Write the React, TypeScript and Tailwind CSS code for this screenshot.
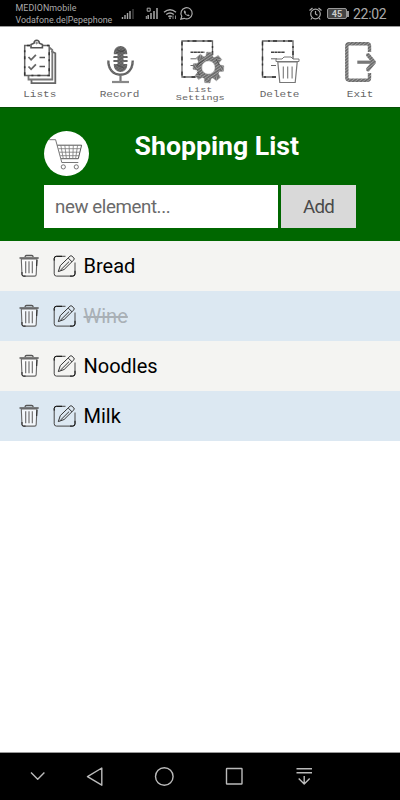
import type { ReactNode } from "react";

const shade = "#666";

function Hatch({ id }: { id: string }) {
  return (
    <pattern id={id} width="2.4" height="2.4" patternUnits="userSpaceOnUse" patternTransform="rotate(-38)">
      <rect width="2.4" height="2.4" fill="#a0a0a0" />
      <path d="M0 .8H2.4" stroke="#555" strokeWidth="1.1" />
    </pattern>
  );
}

function DocumentLines({ x }: { x: number }) {
  return (
    <g transform={`translate(${x} 0)`} fill="none" stroke="#666">
      <path d="M15 77H1.5V41H32V61" strokeWidth="1.3" />
      <path d="M15 77H1.5V41H32V61" strokeWidth="1.4" stroke="#333" strokeDasharray="4 6 2 3" />
      <path d="M10 52.2H24" strokeWidth="1.4" stroke="#444" strokeDasharray="3 .4" />
      <path d="M10 58.8H16M10 65.5H15" strokeWidth="1" />
    </g>
  );
}

function ListsIcon() {
  return (
    <svg className="h-[52px] w-20" viewBox="0 36 80 52" fill="none" stroke={shade}>
      <path d="M31.5 80v3.2h23.8V53.3l-4-2" strokeWidth="1.8" />
      <path d="M28.5 76v3.5h23.8V50l-3-2.5" strokeWidth="1.8" stroke="#777" />
      <path d="M30 45.5h-5.3v30h24.5v-30H43" strokeWidth="1.5" fill="#fff" />
      <path d="M30 45.5h-5.3v30h24.5v-30H43" strokeWidth="1.5" stroke="#333" strokeDasharray="3 7 2 4" />
      <path d="M31 47.8v-3.2l3-1.3c.4-4 5-4 5.4 0l3 1.3v3.2z" strokeWidth="1.6" fill="#fff" stroke="#555" />
      <circle cx="36.6" cy="43" r=".8" />
      <path d="m28.5 57 2.6 2.8 4.8-5M28.5 66.5l2.6 2.8 4.8-5" strokeWidth="1.8" />
      <path d="M39.5 57.5H45M39.5 66.5H45" strokeWidth="1.6" stroke="#555" />
    </svg>
  );
}

function RecordIcon() {
  return (
    <svg className="h-[52px] w-20" viewBox="80 36 80 52" fill="none" stroke={shade}>
      <defs><Hatch id="mic" /></defs>
      <rect x="113.8" y="46" width="13.4" height="26" rx="6.7" fill="url(#mic)" stroke="none" />
      <path d="M113 55.2h4.5M123.5 55.2h4.5M113 59h4.5M123.5 59h4.5M113 63h4.5M123.5 63h4.5" stroke="#fff" strokeWidth="1.8" />
      <path d="M113 57.1h4M124 57.1h4M113 61h4M124 61h4" strokeWidth="1" />
      <path d="M117 50l7 2M116 53l9-3M117 65l7 3" stroke="#444" strokeWidth=".7" />
      <path d="M108.3 60.5c0 8.5 4.5 14.3 12.2 14.3s12.2-5.8 12.2-14.3" strokeWidth="2.4" stroke="url(#mic)" />
      <path d="M120.5 75v6" strokeWidth="2.2" stroke="#777" />
      <path d="M112 82h17" strokeWidth="2.2" stroke="#888" />
    </svg>
  );
}

const teeth = [0, 45, 90, 135, 180, 225, 270, 315];

function SettingsIcon() {
  return (
    <svg className="h-[52px] w-20" viewBox="160 36 80 52">
      <defs><Hatch id="gear" /></defs>
      <DocumentLines x={180.5} />
      <g transform="translate(208.4 67.5) rotate(4)">
        <circle r="13" fill="#fff" />
        {teeth.map((a) => (
          <path key={a} d="M-3.6-10-2.7-15.3H2.7L3.6-10Z" transform={`rotate(${a})`} fill="url(#gear)" stroke="#888" strokeWidth=".4" />
        ))}
        <circle r="9.2" fill="none" stroke="url(#gear)" strokeWidth="5" />
        <circle r="6.6" fill="#fff" stroke="#777" strokeWidth=".4" />
        <path d="M-11-2-5-7M7-9l4 6M-8 8l-3-3M-12 0l4-5" stroke="#444" strokeWidth=".7" />
      </g>
    </svg>
  );
}

function DeleteIcon() {
  return (
    <svg className="h-[52px] w-20" viewBox="240 36 80 52" fill="none" stroke="#777">
      <DocumentLines x={261} />
      <path d="m277.8 62 2 20.5h15.4l2-20.5z" fill="#fff" strokeWidth="1.2" />
      <path d="M276 59h6l2-2h7l2 2h6v2.5h-23z" fill="#fff" strokeWidth="1" />
      <path d="M283.3 66.5v12M287.7 66.5v12M292.1 66.5v12" strokeWidth="1.1" />
    </svg>
  );
}

function ExitIcon() {
  return (
    <svg className="h-[52px] w-20" viewBox="320 36 80 52" fill="none">
      <defs><Hatch id="exit" /></defs>
      <path d="M369.5 52v-6q0-2.2-2.3-2.2h-18q-2.4 0-2.4 2.4v31.6q0 2.4 2.4 2.4h18q2.3 0 2.3-2.2v-5" stroke="url(#exit)" strokeWidth="3.4" />
      <path d="M357.3 62.2H373" stroke="#777" strokeWidth="3.2" />
      <path d="m368 55 6 7.2-6 7.2" stroke="url(#exit)" strokeWidth="4" strokeLinecap="round" strokeLinejoin="round" />
    </svg>
  );
}

function ToolButton({ label, second, children }: { label: string; second?: string; children: ReactNode }) {
  return (
    <button className="flex w-20 flex-col items-center pt-[9px] text-[#666]">
      {children}
      {second ? (
        <span className="-mt-[2px] flex origin-center scale-x-[1.42] flex-col gap-[1px] text-center text-[7.2px] leading-[8px]">
          <span>{label}</span><span className="-mt-[1px]">{second}</span>
        </span>
      ) : (
        <span className="mt-[2px] origin-center scale-x-[1.2] text-[9.2px] leading-[10px]">{label}</span>
      )}
    </button>
  );
}

function CartIcon() {
  return (
    <svg className="h-[45px] w-[45px]" viewBox="44.2 130.8 45 45" fill="none" stroke="#555" strokeWidth=".8">
      <circle cx="66.7" cy="153.3" r="22.5" fill="#fff" stroke="none" />
      <path d="M49.5 139.5h6.3L62 162.3h16.5" />
      <path d="M57.5 145h24.3l-3.3 13.5H61.3" strokeWidth="1" />
      <path d="M58.5 148.5h22.4M59.5 152h20.6M60.5 155.5h18.7M61 145l2.5 13.5M65 145l1.6 13.5M69.3 145l.5 13.5M73.5 145l-.5 13.5M77.8 145l-2 13.5" strokeWidth=".8" stroke="#777" />
      <circle cx="63.5" cy="166.7" r="2.1" />
      <circle cx="76.5" cy="166.7" r="2.1" />
    </svg>
  );
}

function TrashIcon() {
  return (
    <svg className="h-[25px] w-[21px]" viewBox="19 254 21 25" fill="none" stroke="#666">
      <path d="m21.3 259 .7 15.6q.1 1.5 1.6 1.5h11q1.5 0 1.6-1.5l.7-15.6z" fill="#fff" fillOpacity=".65" strokeWidth="1.1" />
      <path d="M22 272v2.6q.1 1.5 1.6 1.5h2M37 260l-.3 6" stroke="#222" />
      <path d="M19.5 258h19.2M25 257q.2-1.5 1.6-1.5h5q1.4 0 1.6 1.5" strokeWidth="1.3" stroke="#555" />
      <path d="M25.7 261.3v12M29 261.3v12M32.3 261.3v12" strokeWidth="1.1" />
    </svg>
  );
}

function EditIcon() {
  return (
    <svg className="h-[25px] w-[24px]" viewBox="53 254 24 25" fill="none" stroke="#444" strokeWidth="1">
      <path d="M65.5 256.3h-9q-2.3 0-2.3 2.3v15.2q0 2.3 2.3 2.3h16.2q2.3 0 2.3-2.3V262.5" />
      <path d="M62 256.3h-5.5q-2.3 0-2.3 2.3v2M70 276.1h2.7q2.3 0 2.3-2.3v-3" stroke="#111" />
      <path d="m58.3 271.6 2-6 9.8-9.5q.9-.7 1.8 0l2 1.9q.8.9 0 1.8l-9.8 9.7zM68.2 258l3.8 3.8M60.3 270.3l8.8-8.7" stroke="#333" />
    </svg>
  );
}

const items = [
  { name: "Bread", done: false },
  { name: "Wine", done: true },
  { name: "Noodles", done: false },
  { name: "Milk", done: false },
];

function StatusBar() {
  return (
    <div className="flex h-[27px] border-b border-[#999] bg-black text-[#aaa]">
      <div className="w-[121px] pt-[2px] pl-[15.5px] text-[8.9px] leading-[12px] whitespace-nowrap">
        <div className="tracking-[.05px]">MEDIONmobile</div>
        <div>Vodafone.de|Pepephone</div>
      </div>
      <svg className="h-[26px] w-[79px]" viewBox="121 0 79 26" fill="none" stroke="#aaa">
        <path d="M122.5 19v-2M125 19v-4M127.5 19v-6M130 19V11" strokeWidth="1.4" />
        <path d="M133 19V9" stroke="#444" strokeWidth="1.4" />
        <path d="M148.2 19v-4M151 19v-6M154 19v-8M157 19V8" strokeWidth="1.5" />
        <path d="M146.3 19v-3M147.2 8.2h3v3h-3z" />
        <path d="M164 12.2q6-5 12 0M166.2 14.5q3.8-3 7.6 0M168.3 16.6q1.7-1.3 3.4 0" strokeWidth="1.4" />
        <circle cx="170" cy="18.2" r=".9" fill="#aaa" stroke="none" />
        <path d="M173 19v-3.5M175.5 15.5V19" strokeWidth=".8" />
        <path d="m180.8 19.2 1-3a5.6 5.6 0 1 1 2.3 2.1z" strokeWidth="1.2" />
        <path d="M184.2 10.5c-1.1 1.3.2 3.3 1.7 4.6s3.1 1.6 3.9.4l-1.8-1.2-.8.7q-1.2-.6-1.7-1.8l.5-.7-.7-1.8z" fill="#aaa" stroke="none" />
      </svg>
      <svg className="ml-[107px] h-[26px] w-[16px]" viewBox="307 0 16 26" fill="none" stroke="#aaa" strokeWidth="1.2">
        <circle cx="315.5" cy="14" r="4.8" />
        <path d="M315.5 11v3l2 1.3M309.5 10.5l3-2.5M318.5 8l3 2.5M312 18l-1.2 1.5M319 18l1.2 1.5" />
      </svg>
      <div className="ml-[4px] flex items-center">
        <div className="mt-px flex h-[11px] w-[20px] items-center justify-center rounded-[2px] border border-[#999] bg-[#444] text-[9px] leading-[10px] font-bold text-[#ccc]">45</div>
        <div className="mt-px h-[6px] w-[2px] bg-[#999]" />
      </div>
      <div className="ml-[4px] pt-[1px] text-[14px] leading-[26px] tracking-[-.3px]">22:02</div>
    </div>
  );
}

export default function App() {
  return (
    <div className="flex h-[800px] w-[400px] flex-col overflow-hidden bg-white font-['Roboto',sans-serif]">
      <StatusBar />
      <nav className="flex h-[80px] font-['Liberation_Mono',monospace]">
        <ToolButton label="Lists"><ListsIcon /></ToolButton>
        <ToolButton label="Record"><RecordIcon /></ToolButton>
        <ToolButton label="List" second="Settings"><SettingsIcon /></ToolButton>
        <ToolButton label="Delete"><DeleteIcon /></ToolButton>
        <ToolButton label="Exit"><ExitIcon /></ToolButton>
      </nav>
      <header className="h-[134px] border-t border-[#064f06] bg-[#006700] px-[44px] pt-[23px]">
        <div className="flex h-[54px]">
          <CartIcon />
          <h1 className="-mt-px ml-[45.5px] text-[26.7px] leading-[33px] font-bold whitespace-nowrap text-white">Shopping List</h1>
        </div>
        <div className="flex gap-[3px]">
          <input className="h-[43px] w-[234px] bg-white pl-[11px] text-[18.7px] tracking-[-.4px] text-[#555] outline-none placeholder:text-[#6a6a6a]" placeholder="new element..." />
          <button className="h-[43px] w-[75px] bg-[#d9d9d9] pt-[1px] text-[18.7px] tracking-[-.7px] text-[#4a4a4a]">Add</button>
        </div>
      </header>
      <ul>
        {items.map((item) => (
          <li key={item.name} className="flex h-[50px] items-center bg-[#f4f4f2] pl-[19px] even:bg-[#dce8f2]">
            <TrashIcon />
            <div className="ml-[13px]"><EditIcon /></div>
            <span className={item.done ? "ml-[6.5px] text-[20px] text-[#a9b0b6] line-through" : "ml-[6.5px] text-[20px] text-black"}>{item.name}</span>
          </li>
        ))}
      </ul>
      <footer className="mt-auto h-[48px] border-t border-[#999] bg-black">
        <svg className="h-[47px] w-[400px]" viewBox="0 753 400 47" fill="none" stroke="#bbb" strokeWidth="1.4">
          <path d="m31 772.5 6.7 6.7 6.7-6.7M101.8 768v17.2L87.5 776.6zM296.5 768.8h15.5M296.5 772.8h15.5M304.2 776v8M298.7 778.5l5.5 5.5 5.5-5.5" strokeLinejoin="round" />
          <circle cx="164.3" cy="776.5" r="8.8" />
          <rect x="226.5" y="768.5" width="15.5" height="15.5" rx=".5" />
        </svg>
      </footer>
    </div>
  );
}
